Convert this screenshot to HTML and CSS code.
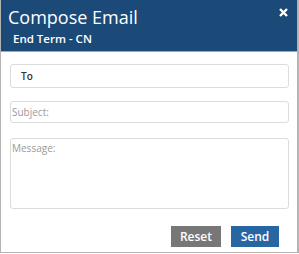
FILE: index.html
```html
<!DOCTYPE html>
<html lang="en">
<head>
<meta charset="utf-8">
<title>Compose Email</title>
<link rel="stylesheet" href="styles.css">
</head>
<body>
	<div class="dialog">
		<div class="dialog-header">
			<div class="title">Compose Email</div>
			<div class="subtitle">End Term - CN</div>
			<span class="close" title="close">
				<svg width="9" height="9" viewBox="0 0 9 9"><path d="M1 1L8 8M8 1L1 8" stroke="#fff" stroke-width="2.4"/></svg>
			</span>
		</div>
		<div class="dialog-body">
			<div class="field field-to">To</div>
			<input class="field field-subject" type="text" placeholder="Subject:">
			<textarea class="field field-message" placeholder="Message:"></textarea>
			<div class="actions">
				<button class="btn btn-reset">Reset</button>
				<button class="btn btn-send">Send</button>
			</div>
		</div>
	</div>
</body>
</html>
```

FILE: styles.css
```css
body {
	margin: 0;
	font-family: "Open Sans", "DejaVu Sans", sans-serif;
	background: #fff;
}

.dialog {
	width: 299px;
	height: 253px;
	box-sizing: border-box;
	border: 1px solid #b3b3b3;
	border-top: none;
	border-right-width: 2px;
	display: flex;
	flex-direction: column;
}

.dialog-header {
	position: relative;
	height: 52px;
	box-sizing: border-box;
	padding: 5px 0 0 7px;
	background: #1b4a79;
	border-bottom: 1px solid #9aa8b8;
	color: #fff;
}

.title {
	font-size: 18px;
	line-height: 25px;
}

.subtitle {
	font-size: 11.5px;
	font-weight: 600;
	line-height: 18px;
	padding-left: 5px;
}

.close {
	position: absolute;
	top: 8px;
	right: 9px;
	display: flex;
}

.dialog-body {
	padding: 12px 8px 0 9px;
	display: flex;
	flex-direction: column;
}

.field {
	box-sizing: border-box;
	width: 100%;
	border: 1px solid #dcdcdc;
	border-radius: 3px;
	font-family: inherit;
	font-size: 10px;
	color: #333;
	background: #fff;
	outline: none;
	margin: 0;
}

.field::placeholder {
	color: #999;
}

.field-to {
	height: 24px;
	line-height: 22px;
	padding-left: 10px;
	font-weight: 600;
}

.field-subject {
	height: 22px;
	margin-top: 13px;
	padding: 0 1px;
}

.field-message {
	height: 71px;
	margin-top: 15px;
	padding: 2px 1px;
	resize: none;
}

.actions {
	display: flex;
	justify-content: flex-end;
	gap: 10px;
	margin-top: 17px;
	padding-right: 10px;
}

.btn {
	height: 21px;
	border: none;
	color: #fff;
	font-family: inherit;
	font-size: 12px;
	font-weight: 600;
	padding: 0;
	cursor: pointer;
}

.btn-reset {
	width: 50px;
	background: #777;
}

.btn-send {
	width: 48px;
	background: #2766a3;
}
```
